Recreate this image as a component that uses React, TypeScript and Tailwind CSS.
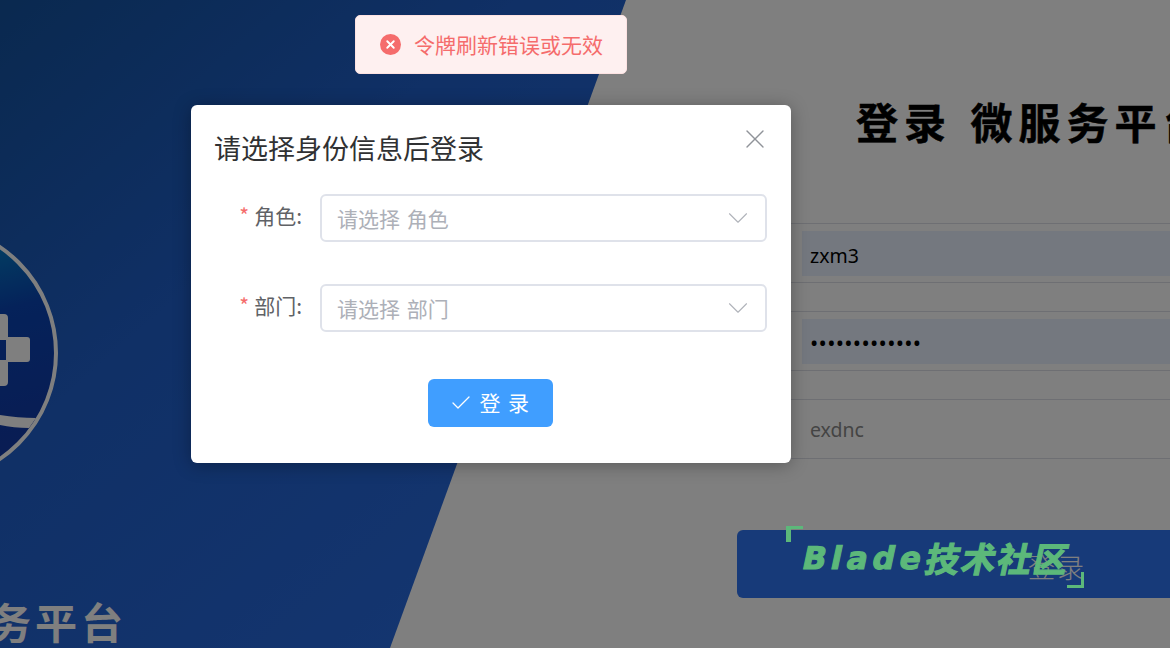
import { Check, ChevronDown, X } from "lucide-react";

const cjk = "font-['Noto_Sans_CJK_SC','Noto_Sans',sans-serif]";

function SelectRow({ label, placeholder }: { label: string; placeholder: string }) {
  return (
    <div className="flex items-center">
      <label className="w-[87px] mr-[18px] text-right text-[21px] leading-[44px] text-[#606266] -mt-[6px] whitespace-nowrap">
        <span className="text-[#f56c6c] mr-[5px]">*</span>
        {label}:
      </label>
      <div className="flex-1 h-[48px] flex items-center justify-between pl-[15px] pr-[10px] bg-white border-2 border-[#dfe2ea] rounded-[6px]">
        <span className="pt-[1px] text-[21px] [word-spacing:2px] text-[#adb0b8]">{placeholder}</span>
        <ChevronDown className="w-[34px] h-[34px] text-[#b0b3ba]" strokeWidth={0.8} />
      </div>
    </div>
  );
}

function LoginInput({ value, filled, className }: { value: string; filled?: boolean; className: string }) {
  return (
    <div className="h-[60px] border-y-[1.5px] border-[#dcdfe6] pl-[65px] flex items-center">
      <div className={`w-full h-[45px] flex items-center pl-[8px] font-['Noto_Sans',sans-serif] ${filled ? "bg-[#e8f0fe]" : ""} ${className}`}>
        {value}
      </div>
    </div>
  );
}

export default function App() {
  return (
    <div className={`relative w-[1170px] h-[648px] overflow-hidden flex bg-white ${cjk}`}>
      {/* Left panel */}
      <aside className="w-[737px] shrink-0 flex flex-col bg-gradient-to-br from-[#14529f] via-[#2060cc] via-35% to-[#2c70ea] [clip-path:polygon(0_0,626px_0,390px_100%,0_100%)]">
        <svg className="mt-[240px] w-[62px] h-[230px]" viewBox="0 240 62 230" fill="none">
          <defs>
            <linearGradient id="disc" x1="0" y1="0" x2="0.25" y2="1">
              <stop offset="0" stopColor="#00b4d8" />
              <stop offset="0.5" stopColor="#0a44b4" />
              <stop offset="1" stopColor="#123aa8" />
            </linearGradient>
          </defs>
          <circle cx="-72" cy="353" r="128" fill="url(#disc)" stroke="#fff" strokeWidth="4" />
          <path d="M-4 314h8a4 4 0 0 1 4 4v19h19a3 3 0 0 1 3 3v19a3 3 0 0 1-3 3H8v20a4 4 0 0 1-4 4h-8zM0 340v20h6v-20z" fill="#fff" fillRule="evenodd" />
          <path d="M0 415c12 2 24 3 36 3l-7 10c-10 0-20-1-29-3z" fill="#fff" />
        </svg>
        <div className="mt-auto mb-[-1px] -ml-[103px] text-[42px] leading-[56px] font-bold tracking-[4px] text-white whitespace-nowrap">
          微服务平台
        </div>
      </aside>

      {/* Right form */}
      <main className="flex-1 min-w-0">
        <h1 className="pt-[91px] pl-[119px] text-[42px] leading-[60px] font-bold tracking-[6px] [word-spacing:3px] [-webkit-text-stroke:0.5px_#000] text-black whitespace-pre">
          登录 微服务平台
        </h1>
        <div className="mt-[72px] w-[640px] flex flex-col gap-[28px]">
          <LoginInput value="zxm3" filled className="pt-[5px] text-[19.5px] text-black" />
          <LoginInput value="•••••••••••••" filled className="pt-[2px] text-[22px] tracking-[0.3px] text-black" />
          <LoginInput value="exdnc" className="pt-[1px] text-[19.5px] text-[#888888]" />
        </div>
        <div className="mt-[71px] w-[640px] h-[68px] pt-[6px] rounded-[6px] bg-[#2e74f2] flex items-center justify-center text-[27px] font-light tracking-[2px] text-white">
          登录
          {/* Logo sits above the mask */}
          <div className="absolute z-20 left-[786px] top-[526px] w-[298px] h-[62px]">
            <span className="absolute left-0 top-0 w-[17px] h-[16px] border-l-[5px] border-t-[3px] border-[#5cb87a]" />
            <span className="absolute right-0 bottom-0 w-[17px] h-[16px] border-r-[3px] border-b-[3px] border-[#5cb87a]" />
            <div className="absolute left-[17px] top-[14px] flex items-center h-[36px] -skew-x-12 text-[#5cb87a] [-webkit-text-stroke:1.2px_#5cb87a] font-bold whitespace-nowrap">
              <span className="font-['DejaVu_Sans',sans-serif] text-[31px] tracking-[5px] leading-[36px]">Blade</span>
              <span className="text-[34px] tracking-[2px] leading-[36px]">技术社区</span>
            </div>
          </div>
        </div>
      </main>

      {/* Mask + dialog */}
      <div className="absolute inset-0 z-10 bg-black/50">
        <section className="mt-[105px] ml-[191px] w-[600px] h-[358px] bg-white rounded-[6px] shadow-[0_2px_18px_rgba(0,0,0,0.3)] px-[24px] pt-[23px] relative">
          <div className="flex items-start justify-between">
            <h2 className="-ml-[1px] text-[27px] leading-[40px] text-[#303133]">请选择身份信息后登录</h2>
            <X className="-mt-[5px] -mr-[4px] w-[32px] h-[32px] text-[#909399]" strokeWidth={1} />
          </div>
          <div className="mt-[26px] flex flex-col gap-[42px]">
            <SelectRow label="角色" placeholder="请选择 角色" />
            <SelectRow label="部门" placeholder="请选择 部门" />
          </div>
          <div className="mt-[47px] pr-[2px] flex justify-center">
            <button className="w-[125px] h-[48px] bg-[#409eff] rounded-[6px] text-white text-[21px] tracking-[1.5px] flex items-center justify-center gap-[6px]">
              <Check className="w-[24px] h-[24px]" strokeWidth={1.3} />
              登 录
            </button>
          </div>
        </section>
      </div>

      {/* Toast */}
      <div className="absolute z-30 top-[15px] left-[355px] w-[272px] h-[59px] bg-[#fef0f0] border border-[#fde2e2] rounded-[5px] flex items-center pl-[24px] gap-[13px]">
        <span className="w-[21px] h-[21px] rounded-full bg-[#f56c6c] flex items-center justify-center">
          <X className="w-[13px] h-[13px] text-white" strokeWidth={3.5} />
        </span>
        <span className="text-[21px] text-[#f56c6c] whitespace-nowrap">令牌刷新错误或无效</span>
      </div>
    </div>
  );
}
